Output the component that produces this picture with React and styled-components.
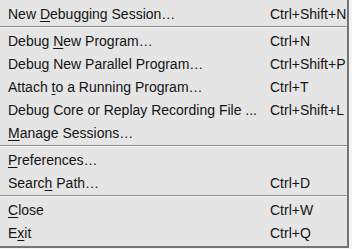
import React from "react";
import styled, { createGlobalStyle } from "styled-components";

const Global = createGlobalStyle`
  html, body { margin: 0; padding: 0; background: #efefef; }
  body { font-family: "Liberation Sans", Arial, sans-serif; }
`;

const Page = styled.div`
  width: 352px;
  height: 249px;
  overflow: hidden;
  background: #f4f4f4;
`;

const Menu = styled.div`
  box-sizing: border-box;
  width: 349px;
  height: 248px;
  padding: 2px 0 2px 0;
  background: #e5e5e5;
  border-right: 2px solid #747474;
  border-bottom: 2px solid #747474;
  display: flex;
  flex-direction: column;
`;

const Item = styled.div`
  display: grid;
  grid-template-columns: 262px 1fr;
  align-items: center;
  height: 23px;
  padding-left: 8px;
  font-size: 14px;
  color: #141414;
  white-space: nowrap;
`;

const Shortcut = styled.span`
  color: #141414;
`;

const Mn = styled.span`
  text-decoration: underline;
  text-underline-offset: 2px;
  text-decoration-thickness: 1px;
`;

const Separator = styled.div`
  height: 4px;
  display: flex;
  flex-direction: column;
  justify-content: center;
  &::before {
    content: "";
    display: block;
    height: 1px;
    background: #8e8e8e;
  }
  &::after {
    content: "";
    display: block;
    height: 1px;
    background: #f7f7f7;
  }
`;

const groups = [
  [
    { pre: "New ", m: "D", post: "ebugging Session…", key: "Ctrl+Shift+N" },
  ],
  [
    { pre: "Debug ", m: "N", post: "ew Program…", key: "Ctrl+N" },
    { pre: "Debu", m: "g", post: " New Parallel Program…", key: "Ctrl+Shift+P" },
    { pre: "Attach ", m: "t", post: "o a Running Program…", key: "Ctrl+T" },
    { pre: "Debug Core or Replay Recording File ...", m: "", post: "", key: "Ctrl+Shift+L" },
    { pre: "", m: "M", post: "anage Sessions…", key: "" },
  ],
  [
    { pre: "", m: "P", post: "references…", key: "" },
    { pre: "Searc", m: "h", post: " Path…", key: "Ctrl+D" },
  ],
  [
    { pre: "", m: "C", post: "lose", key: "Ctrl+W" },
    { pre: "E", m: "x", post: "it", key: "Ctrl+Q" },
  ],
];

export default function App() {
  return (
    <>
      <Global />
      <Page>
        <Menu>
          {groups.map((g, gi) => (
            <React.Fragment key={gi}>
              {gi > 0 && <Separator />}
              {g.map((it, i) => (
                <Item key={i}>
                  <span>
                    {it.pre}
                    {it.m && <Mn>{it.m}</Mn>}
                    {it.post}
                  </span>
                  <Shortcut>{it.key}</Shortcut>
                </Item>
              ))}
            </React.Fragment>
          ))}
        </Menu>
      </Page>
    </>
  );
}
